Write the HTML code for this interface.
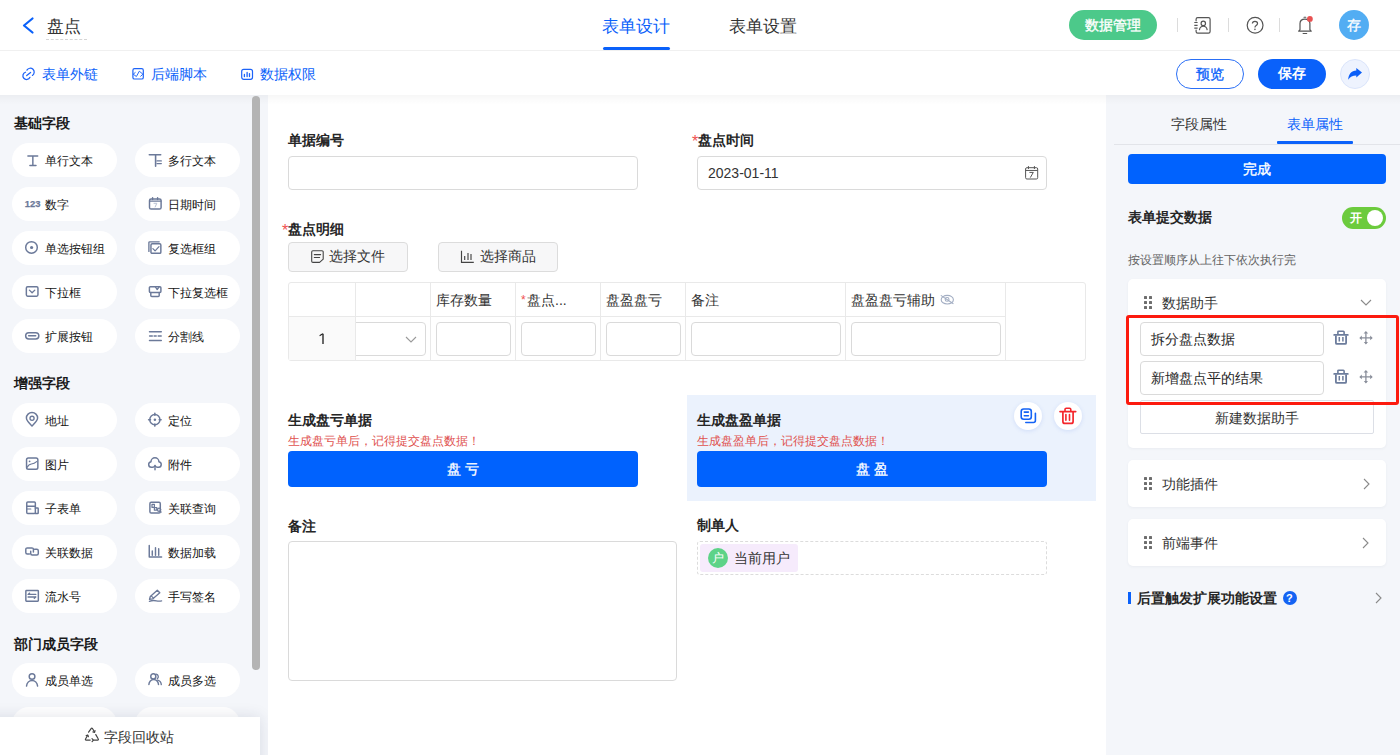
<!DOCTYPE html>
<html><head><meta charset="utf-8">
<style>
*{box-sizing:border-box;margin:0;padding:0}
html,body{width:1400px;height:755px;overflow:hidden;background:#fff}
body{font-family:"Liberation Sans",sans-serif;color:#333;position:relative}
.a{position:absolute}
.t{position:absolute;line-height:20px;white-space:nowrap}
svg{position:absolute;overflow:visible}
/* header */
#hdr{left:0;top:0;width:1400px;height:51px;background:#fff;border-bottom:1px solid #f0f0f0}
#tb{left:0;top:51px;width:1400px;height:44px;background:#fff}
#lp{left:0;top:95px;width:268px;height:660px;background:#f4f6fa}
#cv{left:268px;top:95px;width:838px;height:660px;background:#fff}
#rp{left:1106px;top:95px;width:294px;height:660px;background:#f4f6fa}
#shadow{left:0;top:95px;width:1400px;height:10px;background:linear-gradient(rgba(0,0,0,0.035),rgba(0,0,0,0.012) 60%,rgba(0,0,0,0))}
.blue{color:#0a61fa}
.pill{position:absolute;width:105px;height:34px;border-radius:17px;background:#fff}
.pill .t{left:33px;top:8px;font-size:12px;color:#141414}
.pill svg{left:15px;top:11px}
.sec{position:absolute;left:14px;font-size:14px;font-weight:bold;color:#1a1a1a;line-height:20px}
</style></head><body>
<div id="hdr" class="a"></div>
<div id="tb" class="a"></div>
<div id="lp" class="a"></div>
<div id="cv" class="a"></div>
<div id="rp" class="a"></div>
<div id="shadow" class="a"></div>
<!-- LEFT PANEL -->
<div class="sec" style="top:113px">基础字段</div>
<div class="pill" style="left:12px;top:143px"><svg width="14" height="14" style="left:13px;top:10px"><path d="M2.9 3.1H12.7M7.85 3.1V12.6M4.9 12.6H11" fill="none" stroke="#6b7999" stroke-width="1.46" stroke-linecap="round" stroke-linejoin="round" /></svg><div class="t">单行文本</div></div>
<div class="pill" style="left:135px;top:143px"><svg width="14" height="14" style="left:13px;top:10px"><path d="M1.3 1.8H12.7M7.6 1.8V13.3" fill="none" stroke="#6b7999" stroke-width="1.57" stroke-linecap="round" stroke-linejoin="round" /><path d="M9 7.9H13.3M9 10.6H13.3" fill="none" stroke="#6b7999" stroke-width="1.34" stroke-linecap="round" stroke-linejoin="round" /></svg><div class="t">多行文本</div></div>
<div class="pill" style="left:12px;top:187px"><svg width="14" height="14" style="left:13px;top:10px"><text x="-0.3" y="9.8" font-family="Liberation Sans" font-weight="bold" font-size="9.4" stroke="#6b7999" stroke-width="0.25" fill="#6b7999">123</text></svg><div class="t">数字</div></div>
<div class="pill" style="left:135px;top:187px"><svg width="14" height="14" style="left:13px;top:10px"><rect x="1.5" y="1.9" width="11.6" height="10.2" rx="1.6" fill="none" stroke="#6b7999" stroke-width="1.46"/><path d="M1.8 4.2H12.8" fill="none" stroke="#6b7999" stroke-width="1.34" stroke-linecap="round" stroke-linejoin="round" /><path d="M4.6 0.8V2.6M9.6 0.8V2.6" fill="none" stroke="#6b7999" stroke-width="1.46" stroke-linecap="round" stroke-linejoin="round" /><path d="M5.6 6.3H8.8L7 10.3" fill="none" stroke="#b9c2d4" stroke-width="1"/></svg><div class="t">日期时间</div></div>
<div class="pill" style="left:12px;top:231px"><svg width="14" height="14" style="left:13px;top:10px"><circle cx="6.5" cy="6.45" r="5.8" fill="none" stroke="#6b7999" stroke-width="1.46"/><circle cx="6.6" cy="6.5" r="1.6" fill="#6b7999"/></svg><div class="t">单选按钮组</div></div>
<div class="pill" style="left:135px;top:231px"><svg width="14" height="14" style="left:13px;top:10px"><path d="M0.9 10.4V1.6a0.8 0.8 0 0 1 0.8-0.8H11.2" fill="none" stroke="#6b7999" stroke-width="1.34" stroke-linecap="round" stroke-linejoin="round" /><rect x="2.95" y="2.75" width="9.9" height="9.6" rx="1.2" fill="none" stroke="#6b7999" stroke-width="1.46"/><path d="M4.9 7.6L7.1 9.9L11 5.6" fill="none" stroke="#6b7999" stroke-width="1.23" stroke-linecap="round" stroke-linejoin="round" /></svg><div class="t">复选框组</div></div>
<div class="pill" style="left:12px;top:275px"><svg width="14" height="14" style="left:13px;top:10px"><rect x="1.35" y="1.75" width="11.6" height="9.4" rx="1.3" fill="none" stroke="#6b7999" stroke-width="1.46"/><path d="M4.4 5.1L7.1 7.8L9.8 5.1" fill="none" stroke="#6b7999" stroke-width="1.34" stroke-linecap="round" stroke-linejoin="round" /></svg><div class="t">下拉框</div></div>
<div class="pill" style="left:135px;top:275px"><svg width="14" height="14" style="left:13px;top:10px"><path d="M2.6 7.4H11.9a1 1 0 0 0 1-1V2.8a1 1 0 0 0-1-1H2.4a1 1 0 0 0-1 1V6.4a1 1 0 0 0 1 1z" fill="none" stroke="#6b7999" stroke-width="1.46" stroke-linecap="round" stroke-linejoin="round" /><path d="M2.8 7.5V10.6a1 1 0 0 0 1 1H10.2a1 1 0 0 0 1-1V7.5" fill="none" stroke="#6b7999" stroke-width="1.46" stroke-linecap="round" stroke-linejoin="round" /><path d="M7.5 2.2L9.2 4.6L11 2.2" fill="none" stroke="#6b7999" stroke-width="1.23" stroke-linecap="round" stroke-linejoin="round" /></svg><div class="t">下拉复选框</div></div>
<div class="pill" style="left:12px;top:319px"><svg width="14" height="14" style="left:13px;top:10px"><rect x="0.65" y="3.65" width="13.2" height="6.3" rx="3.15" fill="none" stroke="#6b7999" stroke-width="1.46"/><path d="M3.6 6.7H10.7" fill="none" stroke="#6b7999" stroke-width="1.46" stroke-linecap="round" stroke-linejoin="round" /></svg><div class="t">扩展按钮</div></div>
<div class="pill" style="left:135px;top:319px"><svg width="14" height="14" style="left:13px;top:10px"><path d="M1.5 2.7H13.3M1.5 11.4H13.3" fill="none" stroke="#6b7999" stroke-width="1.46" stroke-linecap="round" stroke-linejoin="round" /><path d="M1.6 7.1H4.3M6.1 7.1H8.2M10.2 7.1H13.2" fill="none" stroke="#6b7999" stroke-width="1.46" stroke-linecap="round" stroke-linejoin="round" /></svg><div class="t">分割线</div></div>
<div class="sec" style="top:373px">增强字段</div>
<div class="pill" style="left:12px;top:403px"><svg width="14" height="14" style="left:13px;top:10px"><path d="M7 13.1C4.2 10.3 1.4 7.8 1.4 5.1A5.6 5.6 0 0 1 12.6 5.1C12.6 7.8 9.8 10.3 7 13.1Z" fill="none" stroke="#6b7999" stroke-width="1.46" stroke-linecap="round" stroke-linejoin="round" /><circle cx="7.05" cy="5.3" r="2.05" fill="none" stroke="#6b7999" stroke-width="1.34"/></svg><div class="t">地址</div></div>
<div class="pill" style="left:135px;top:403px"><svg width="14" height="14" style="left:13px;top:10px"><circle cx="6.85" cy="6.7" r="5.1" fill="none" stroke="#6b7999" stroke-width="1.46"/><circle cx="6.9" cy="6.75" r="1.25" fill="#6b7999"/><path d="M6.85 0.4V2.3M6.85 11.1V13.1M0.6 6.7H2.5M11.2 6.7H13.1" fill="none" stroke="#6b7999" stroke-width="1.57" stroke-linecap="round" stroke-linejoin="round" /></svg><div class="t">定位</div></div>
<div class="pill" style="left:12px;top:447px"><svg width="14" height="14" style="left:13px;top:10px"><rect x="1.55" y="0.95" width="11.3" height="11.3" rx="1.8" fill="none" stroke="#6b7999" stroke-width="1.46"/><path d="M2.4 10.2C3 8 4.4 7.3 6.4 7C8.6 6.7 10 6 11.6 4.6" fill="none" stroke="#6b7999" stroke-width="1.23" stroke-linecap="round" stroke-linejoin="round" /><circle cx="4.6" cy="4.3" r="0.9" fill="#6b7999"/></svg><div class="t">图片</div></div>
<div class="pill" style="left:135px;top:447px"><svg width="14" height="14" style="left:13px;top:10px"><path d="M5.2 10.3H3.3A2.8 2.8 0 0 1 3 4.75A3.8 3.8 0 0 1 10.9 4.75A2.8 2.8 0 0 1 10.7 10.3H8.8" fill="none" stroke="#6b7999" stroke-width="1.46" stroke-linecap="round" stroke-linejoin="round" /><path d="M7 12.8V9" fill="none" stroke="#6b7999" stroke-width="1.46" stroke-linecap="round" stroke-linejoin="round" /><path d="M4.9 9.9L7 7.4L9.1 9.9Z" fill="#6b7999"/></svg><div class="t">附件</div></div>
<div class="pill" style="left:12px;top:491px"><svg width="14" height="14" style="left:13px;top:10px"><rect x="1.75" y="1" width="8.6" height="11.5" rx="1" fill="none" stroke="#6b7999" stroke-width="1.46"/><path d="M1.8 5.2H10.3" fill="none" stroke="#6b7999" stroke-width="1.46" stroke-linecap="round" stroke-linejoin="round" /><path d="M1.8 8H5.8" fill="none" stroke="#6b7999" stroke-width="1.23" stroke-linecap="round" stroke-linejoin="round" /><path d="M10.3 6.9H12.6a0.6 0.6 0 0 1 0.6 0.6V12a0.6 0.6 0 0 1-0.6 0.6H10.3" fill="none" stroke="#6b7999" stroke-width="1.46" stroke-linecap="round" stroke-linejoin="round" /></svg><div class="t">子表单</div></div>
<div class="pill" style="left:135px;top:491px"><svg width="14" height="14" style="left:13px;top:10px"><rect x="1.9" y="1.35" width="10.4" height="10.6" rx="1.3" fill="none" stroke="#6b7999" stroke-width="1.46"/><path d="M4 3.4H6.4V6.4H4Z" fill="none" stroke="#6b7999" stroke-width="1.23" stroke-linecap="round" stroke-linejoin="round" /><path d="M6.4 6.6H8.8V9.2H6.4Z" fill="none" stroke="#6b7999" stroke-width="1.23" stroke-linecap="round" stroke-linejoin="round" /><circle cx="11.1" cy="8.7" r="1.6" fill="none" stroke="#6b7999" stroke-width="1.34"/><path d="M12.2 9.9L13 11.2" fill="none" stroke="#6b7999" stroke-width="1.34" stroke-linecap="round" stroke-linejoin="round" /></svg><div class="t">关联查询</div></div>
<div class="pill" style="left:12px;top:535px"><svg width="14" height="14" style="left:13px;top:10px"><path d="M4.4 9H2.3A1.5 1.5 0 0 1 0.8 7.5V4.4A1.5 1.5 0 0 1 2.3 2.9H6.9A1.5 1.5 0 0 1 8.4 4.4V7" fill="none" stroke="#6b7999" stroke-width="1.46" stroke-linecap="round" stroke-linejoin="round" /><path d="M9.5 4.3H11.8A1.5 1.5 0 0 1 13.3 5.8V8.6A1.5 1.5 0 0 1 11.8 10.1H7.2A1.5 1.5 0 0 1 5.7 8.6V6.2" fill="none" stroke="#6b7999" stroke-width="1.46" stroke-linecap="round" stroke-linejoin="round" /></svg><div class="t">关联数据</div></div>
<div class="pill" style="left:135px;top:535px"><svg width="14" height="14" style="left:13px;top:10px"><path d="M1.25 0.6V12.1H13.6" fill="none" stroke="#6b7999" stroke-width="1.46" stroke-linecap="round" stroke-linejoin="round" /><path d="M4.3 5.9V10.3M7.5 2.7V10.3M10.7 3.8V10.3" fill="none" stroke="#6b7999" stroke-width="1.46" stroke-linecap="round" stroke-linejoin="round" /></svg><div class="t">数据加载</div></div>
<div class="pill" style="left:12px;top:579px"><svg width="14" height="14" style="left:13px;top:10px"><rect x="0.85" y="1.55" width="12.5" height="10.6" rx="0.6" fill="none" stroke="#6b7999" stroke-width="1.46"/><path d="M3.1 5.4H10.8M3.2 5.4L4.6 4.1M3.1 8H10.8M10.8 8L9.3 9.3" fill="none" stroke="#6b7999" stroke-width="1.34" stroke-linecap="round" stroke-linejoin="round" /></svg><div class="t">流水号</div></div>
<div class="pill" style="left:135px;top:579px"><svg width="14" height="14" style="left:13px;top:10px"><path d="M1.5 10.4L2.3 7.5L9.3 1.2L11.8 3.7L4.6 9.9Z" fill="none" stroke="#6b7999" stroke-width="1.34" stroke-linecap="round" stroke-linejoin="round" /><path d="M3.4 7.2L5.4 9" fill="none" stroke="#6b7999" stroke-width="1.12" stroke-linecap="round" stroke-linejoin="round" /><path d="M1.4 12.3C4 11.3 6.5 11.4 8.3 11.8C10 12.2 11.8 12.3 13.6 11.9" fill="none" stroke="#6b7999" stroke-width="1.34" stroke-linecap="round" stroke-linejoin="round" /></svg><div class="t">手写签名</div></div>
<div class="sec" style="top:634px">部门成员字段</div>
<div class="pill" style="left:12px;top:663px"><svg width="14" height="14" style="left:13px;top:10px"><circle cx="7.05" cy="3.5" r="2.85" fill="none" stroke="#6b7999" stroke-width="1.46"/><path d="M1.5 13.1A5.6 6.4 0 0 1 12.6 13.1" fill="none" stroke="#6b7999" stroke-width="1.46" stroke-linecap="round" stroke-linejoin="round" /></svg><div class="t">成员单选</div></div>
<div class="pill" style="left:135px;top:663px"><svg width="14" height="14" style="left:13px;top:10px"><circle cx="5.3" cy="3.4" r="2.55" fill="none" stroke="#6b7999" stroke-width="1.46"/><path d="M8.2 1.1A2.6 2.6 0 0 1 9.3 5.7" fill="none" stroke="#6b7999" stroke-width="1.34" stroke-linecap="round" stroke-linejoin="round" /><path d="M0.9 11.6A4.8 5.2 0 0 1 10.5 11.6" fill="none" stroke="#6b7999" stroke-width="1.46" stroke-linecap="round" stroke-linejoin="round" /><path d="M9.6 7.1A4.7 5 0 0 1 13.3 11.6" fill="none" stroke="#6b7999" stroke-width="1.34" stroke-linecap="round" stroke-linejoin="round" /></svg><div class="t">成员多选</div></div>
<div class="pill" style="left:12px;top:707px"></div><div class="pill" style="left:135px;top:707px"></div>
<div class="a" style="left:252px;top:96px;width:8px;height:574px;border-radius:4px;background:#b4b4b4"></div>
<div class="a" style="left:0;top:600px;width:268px;height:155px;overflow:hidden"><div class="a" style="left:-20px;top:117px;width:280px;height:60px;background:#fff;box-shadow:0 0 14px rgba(30,40,80,0.13)"></div></div>
<svg width="18" height="18" style="left:83px;top:726px"><g fill="none" stroke="#444" stroke-width="1.2" stroke-linejoin="round" stroke-linecap="round"><path d="M5.6 6.2L8.3 2.3a0.6 0.6 0 0 1 1 0L11.4 5.8"/><path d="M12.8 8.6L15.3 13a0.7 0.7 0 0 1-0.6 1.1H10.6"/><path d="M7.2 14.1H3.1a0.7 0.7 0 0 1-0.6-1.1L4.7 9.3"/><path d="M9.9 5.9L11.6 6.3L12 4.6"/><path d="M3.2 9.6L4.8 9.1L5.4 10.7"/><path d="M9.1 15.6L10.4 14.1L9 12.7"/></g></svg>
<div class="t" style="left:104px;top:727px;font-size:14px;color:#333">字段回收站</div>
<!-- CANVAS -->
<style>
.lbl{position:absolute;font-size:14px;font-weight:bold;color:#262626;line-height:20px;white-space:nowrap}
.req{color:#f0504f;font-weight:normal;font-size:16px;position:absolute;left:-6px;top:2px}
.inp{position:absolute;border:1px solid #dadada;border-radius:4px;background:#fff}
.th{position:absolute;font-size:14px;color:#333;line-height:20px;white-space:nowrap;top:290px}
.vl{position:absolute;width:1px;background:#e9e9e9}
.btn2{position:absolute;height:30px;width:120px;border:1px solid #dcdcdc;border-radius:4px;background:#f7f7f8}
</style>
<div class="lbl" style="left:288px;top:130px">单据编号</div>
<div class="inp" style="left:288px;top:156px;width:350px;height:34px"></div>
<div class="lbl" style="left:698px;top:130px"><span class="req">*</span>盘点时间</div>
<div class="inp" style="left:697px;top:156px;width:350px;height:34px"></div>
<div class="t" style="left:708px;top:163px;font-size:14px;color:#333">2023-01-11</div>
<svg width="24" height="22" style="left:1020px;top:162px"><rect x="5.6" y="5.7" width="12.1" height="11.3" rx="1.3" fill="none" stroke="#555" stroke-width="1"/><path d="M5.6 8.45H17.7M8.45 4.1V7M14.4 4.1V7" stroke="#555" stroke-width="1" fill="none"/><path d="M9.4 10.4H13.3L10.3 15.6" fill="none" stroke="#555" stroke-width="1"/></svg>
<div class="lbl" style="left:288px;top:219px"><span class="req">*</span>盘点明细</div>
<div class="btn2" style="left:288px;top:242px"></div>
<svg width="24" height="22" style="left:306px;top:246px"><path d="M5.7 6a1.2 1.2 0 0 1 1.2-1.2H16a1.2 1.2 0 0 1 1.2 1.2V13.2L13.6 16.4H6.9a1.2 1.2 0 0 1-1.2-1.2Z" fill="none" stroke="#444" stroke-width="1.1" stroke-linejoin="round"/><path d="M8.3 8.6H14.6M8.3 11.5H13.6" stroke="#444" stroke-width="1.1" stroke-linecap="round"/></svg>
<div class="t" style="left:329px;top:246px;font-size:14px;color:#333">选择文件</div>
<div class="btn2" style="left:438px;top:242px"></div>
<svg width="24" height="22" style="left:456px;top:246px"><path d="M5.5 4.7V16.4H17.8" fill="none" stroke="#444" stroke-width="1.15"/><path d="M8.7 10V14M12 7V14M15 8V14" stroke="#444" stroke-width="1.15"/></svg>
<div class="t" style="left:480px;top:246px;font-size:14px;color:#333">选择商品</div>
<!-- table -->
<div class="a" style="left:288px;top:282px;width:798px;height:79px;border:1px solid #e9e9e9;border-radius:3px"></div>
<div class="a" style="left:289px;top:317px;width:66px;height:43px;background:#fafafa"></div>
<div class="a" style="left:289px;top:316px;width:717px;height:1px;background:#e9e9e9"></div>
<div class="vl" style="left:355px;top:283px;height:77px"></div>
<div class="vl" style="left:430px;top:283px;height:77px"></div>
<div class="vl" style="left:515px;top:283px;height:77px"></div>
<div class="vl" style="left:600px;top:283px;height:77px"></div>
<div class="vl" style="left:685px;top:283px;height:77px"></div>
<div class="vl" style="left:845px;top:283px;height:77px"></div>
<div class="vl" style="left:1005px;top:283px;height:77px"></div>
<div class="th" style="left:436px">库存数量</div>
<div class="th" style="left:527px"><span style="color:#f0504f;font-size:12px;position:absolute;left:-6px;top:0">*</span>盘点...</div>
<div class="th" style="left:606px">盘盈盘亏</div>
<div class="th" style="left:691px">备注</div>
<div class="th" style="left:851px">盘盈盘亏辅助</div>
<svg width="24" height="20" style="left:936px;top:290px"><ellipse cx="11.3" cy="9.7" rx="6.1" ry="4.3" fill="none" stroke="#a3aec3" stroke-width="1.1"/><circle cx="11.1" cy="9.4" r="1.9" fill="none" stroke="#a3aec3" stroke-width="1.1"/><path d="M4.8 5.4L17.4 13.8" stroke="#a3aec3" stroke-width="1.1"/></svg>
<svg width="10" height="14" style="left:317px;top:332px"><path d="M2.6 3.7C3.9 3.1 5 2.4 5.9 1.8" fill="none" stroke="#222" stroke-width="1.2"/><path d="M6 1.8V12" stroke="#222" stroke-width="1.35"/></svg>
<div class="a" style="left:356px;top:322px;width:70px;height:34px;overflow:hidden"><div class="inp" style="left:-10px;top:0;width:80px;height:34px"></div></div>
<svg width="14" height="10" style="left:404px;top:334px"><path d="M2 3l5 5 5-5" fill="none" stroke="#9a9a9a" stroke-width="1.1"/></svg>
<div class="inp" style="left:436px;top:322px;width:75px;height:34px"></div>
<div class="inp" style="left:521px;top:322px;width:75px;height:34px"></div>
<div class="inp" style="left:606px;top:322px;width:75px;height:34px"></div>
<div class="inp" style="left:691px;top:322px;width:150px;height:34px"></div>
<div class="inp" style="left:851px;top:322px;width:150px;height:34px"></div>
<!-- generate sections -->
<div class="lbl" style="left:288px;top:410px">生成盘亏单据</div>
<div class="t" style="left:288px;top:431px;font-size:12px;color:#e0524f">生成盘亏单后，记得提交盘点数据！</div>
<div class="a" style="left:288px;top:451px;width:350px;height:36px;border-radius:4px;background:#0062fe"></div>
<div class="t" style="left:288px;top:459px;width:350px;text-align:center;font-size:14px;color:#fff;letter-spacing:4px;text-indent:4px;-webkit-text-stroke:0.3px #fff">盘亏</div>
<div class="a" style="left:687px;top:395px;width:409px;height:106px;background:#ebf2fd"></div>
<div class="lbl" style="left:697px;top:410px">生成盘盈单据</div>
<div class="t" style="left:697px;top:431px;font-size:12px;color:#e0524f">生成盘盈单后，记得提交盘点数据！</div>
<div class="a" style="left:697px;top:451px;width:350px;height:36px;border-radius:4px;background:#0062fe"></div>
<div class="t" style="left:697px;top:459px;width:350px;text-align:center;font-size:14px;color:#fff;letter-spacing:4px;text-indent:4px;-webkit-text-stroke:0.3px #fff">盘盈</div>
<div class="a" style="left:1014px;top:402px;width:28px;height:28px;border-radius:50%;background:#fff;box-shadow:0 1px 4px rgba(60,110,220,0.15)"></div>
<svg width="28" height="28" style="left:1014px;top:402px"><rect x="7.2" y="7" width="10.1" height="10.2" rx="2.5" fill="none" stroke="#1463f5" stroke-width="1.6"/><path d="M10.3 10.1H14.4M10.3 13.7H14.4" stroke="#1463f5" stroke-width="1.6" stroke-linecap="round"/><path d="M21.4 11.2V18.5a2 2 0 0 1-2 2H11.8" fill="none" stroke="#1463f5" stroke-width="1.6" stroke-linecap="round"/></svg>
<div class="a" style="left:1054px;top:402px;width:28px;height:28px;border-radius:50%;background:#fff;box-shadow:0 1px 4px rgba(60,110,220,0.15)"></div>
<svg width="28" height="28" style="left:1054px;top:402px"><path d="M6 9.6H21.7" stroke="#f4262c" stroke-width="1.7" stroke-linecap="round"/><path d="M11 9.3V7.6a1.3 1.3 0 0 1 1.3-1.3h3.2a1.3 1.3 0 0 1 1.3 1.3V9.3" fill="none" stroke="#f4262c" stroke-width="1.6"/><path d="M8.9 10V19.4a2 2 0 0 0 2 2H17.1a2 2 0 0 0 2-2V10" fill="none" stroke="#f4262c" stroke-width="1.7"/><path d="M11.9 12.6V18.2M15.5 12.6V18.2" stroke="#f4262c" stroke-width="1.6" stroke-linecap="round"/></svg>
<div class="lbl" style="left:288px;top:516px">备注</div>
<div class="inp" style="left:288px;top:541px;width:389px;height:140px"></div>
<div class="lbl" style="left:697px;top:515px">制单人</div>
<div class="a" style="left:697px;top:541px;width:350px;height:34px;border:1px dashed #dcdcdc;border-radius:3px"></div>
<div class="a" style="left:700px;top:544px;width:98px;height:28px;border-radius:3px;background:#f6ebfc"></div>
<div class="a" style="left:708px;top:548px;width:20px;height:20px;border-radius:50%;background:#5dd388"></div>
<div class="t" style="left:712px;top:548px;font-size:12px;color:#fff">户</div>
<div class="t" style="left:734px;top:548px;font-size:14px;color:#333">当前用户</div>
<!-- RIGHT PANEL -->
<div class="t" style="left:1171px;top:114px;font-size:14px;color:#333">字段属性</div>
<div class="t" style="left:1287px;top:114px;font-size:14px;color:#0a61fa">表单属性</div>
<div class="a" style="left:1114px;top:144px;width:286px;height:1px;background:#e2e4e9"></div>
<div class="a" style="left:1277px;top:141px;width:76px;height:3px;border-radius:1px;background:#0a61fa"></div>
<div class="a" style="left:1128px;top:154px;width:258px;height:30px;border-radius:4px;background:#0062fe"></div>
<div class="t" style="left:1128px;top:159px;width:258px;text-align:center;font-size:14px;color:#fff;-webkit-text-stroke:0.35px #fff">完成</div>
<div class="t" style="left:1128px;top:207px;font-size:14px;color:#262626;font-weight:bold">表单提交数据</div>
<div class="a" style="left:1342px;top:207px;width:44px;height:22px;border-radius:11px;background:#6ccb3d"></div>
<div class="a" style="left:1367px;top:210px;width:16px;height:16px;border-radius:50%;background:#fff"></div>
<div class="t" style="left:1350px;top:208px;font-size:12px;color:#fff;font-weight:bold">开</div>
<div class="t" style="left:1128px;top:250px;font-size:12px;color:#626262">按设置顺序从上往下依次执行完</div>
<div class="a" style="left:1128px;top:279px;width:258px;height:169px;border-radius:5px;background:#fff;box-shadow:0 1px 3px rgba(40,50,80,0.05)"></div>

<div class="a" style="left:1144px;top:296px;width:3px;height:3px;background:#6e6e6e;border-radius:0.5px"></div><div class="a" style="left:1144px;top:301px;width:3px;height:3px;background:#6e6e6e;border-radius:0.5px"></div><div class="a" style="left:1144px;top:306px;width:3px;height:3px;background:#6e6e6e;border-radius:0.5px"></div><div class="a" style="left:1149px;top:296px;width:3px;height:3px;background:#6e6e6e;border-radius:0.5px"></div><div class="a" style="left:1149px;top:301px;width:3px;height:3px;background:#6e6e6e;border-radius:0.5px"></div><div class="a" style="left:1149px;top:306px;width:3px;height:3px;background:#6e6e6e;border-radius:0.5px"></div>
<div class="t" style="left:1162px;top:293px;font-size:14px;color:#333">数据助手</div>
<svg width="14" height="10" style="left:1359px;top:298px"><path d="M2 2l5 5 5-5" fill="none" stroke="#8a8a8a" stroke-width="1.1"/></svg>
<div class="inp" style="left:1140px;top:322px;width:184px;height:34px"></div>
<div class="t" style="left:1151px;top:329px;font-size:14px;color:#262626">拆分盘点数据</div>
<div class="inp" style="left:1140px;top:361px;width:184px;height:34px"></div>
<div class="t" style="left:1151px;top:368px;font-size:14px;color:#262626">新增盘点平的结果</div>
<svg width="16" height="16" style="left:1333px;top:330px"><path d="M1.2 4.9H14.8" stroke="#6c7c9c" stroke-width="1.8" stroke-linecap="round"/><path d="M4.9 4.6V2a0.8 0.8 0 0 1 0.8-0.8H10.3a0.8 0.8 0 0 1 0.8 0.8V4.6" fill="none" stroke="#6c7c9c" stroke-width="1.6"/><path d="M2.9 5.5V12.9a1 1 0 0 0 1 1H12.1a1 1 0 0 0 1-1V5.5" fill="none" stroke="#6c7c9c" stroke-width="1.8"/><path d="M6.3 6.9V11.5M9.9 6.9V11.5" stroke="#6c7c9c" stroke-width="1.5"/></svg>
<svg width="16" height="16" style="left:1358px;top:330px"><path d="M2.5 7.9H13.5M7.9 2.2V13.4" stroke="#8a8f9b" stroke-width="1.3"/><path d="M7.9 0.9L5.6 3.4H10.2ZM7.9 14.5L5.8 12.1H10ZM1.3 7.9L3.8 5.6V10.2ZM14.7 7.9L12.2 5.6V10.2Z" fill="#8a8f9b"/></svg>
<svg width="16" height="16" style="left:1333px;top:369px"><path d="M1.2 4.9H14.8" stroke="#6c7c9c" stroke-width="1.8" stroke-linecap="round"/><path d="M4.9 4.6V2a0.8 0.8 0 0 1 0.8-0.8H10.3a0.8 0.8 0 0 1 0.8 0.8V4.6" fill="none" stroke="#6c7c9c" stroke-width="1.6"/><path d="M2.9 5.5V12.9a1 1 0 0 0 1 1H12.1a1 1 0 0 0 1-1V5.5" fill="none" stroke="#6c7c9c" stroke-width="1.8"/><path d="M6.3 6.9V11.5M9.9 6.9V11.5" stroke="#6c7c9c" stroke-width="1.5"/></svg>
<svg width="16" height="16" style="left:1358px;top:369px"><path d="M2.5 7.9H13.5M7.9 2.2V13.4" stroke="#8a8f9b" stroke-width="1.3"/><path d="M7.9 0.9L5.6 3.4H10.2ZM7.9 14.5L5.8 12.1H10ZM1.3 7.9L3.8 5.6V10.2ZM14.7 7.9L12.2 5.6V10.2Z" fill="#8a8f9b"/></svg>
<div class="a" style="left:1140px;top:400px;width:234px;height:34px;border:1px solid #dcdfe6;border-radius:2px;background:#fff"></div>
<div class="t" style="left:1140px;top:408px;width:234px;text-align:center;font-size:14px;color:#333">新建数据助手</div>
<div class="a" style="left:1126px;top:315px;width:273px;height:90px;border:3px solid #fc1a0e;border-radius:3px"></div>
<div class="a" style="left:1128px;top:460px;width:258px;height:47px;border-radius:5px;background:#fff;box-shadow:0 1px 3px rgba(40,50,80,0.05)"></div>

<div class="a" style="left:1144px;top:477px;width:3px;height:3px;background:#6e6e6e;border-radius:0.5px"></div><div class="a" style="left:1144px;top:482px;width:3px;height:3px;background:#6e6e6e;border-radius:0.5px"></div><div class="a" style="left:1144px;top:487px;width:3px;height:3px;background:#6e6e6e;border-radius:0.5px"></div><div class="a" style="left:1149px;top:477px;width:3px;height:3px;background:#6e6e6e;border-radius:0.5px"></div><div class="a" style="left:1149px;top:482px;width:3px;height:3px;background:#6e6e6e;border-radius:0.5px"></div><div class="a" style="left:1149px;top:487px;width:3px;height:3px;background:#6e6e6e;border-radius:0.5px"></div>
<div class="t" style="left:1162px;top:474px;font-size:14px;color:#333">功能插件</div>
<svg width="10" height="14" style="left:1361px;top:477px"><path d="M3 2l5 5-5 5" fill="none" stroke="#8a8a8a" stroke-width="1.1"/></svg>
<div class="a" style="left:1128px;top:519px;width:258px;height:47px;border-radius:5px;background:#fff;box-shadow:0 1px 3px rgba(40,50,80,0.05)"></div>

<div class="a" style="left:1144px;top:536px;width:3px;height:3px;background:#6e6e6e;border-radius:0.5px"></div><div class="a" style="left:1144px;top:541px;width:3px;height:3px;background:#6e6e6e;border-radius:0.5px"></div><div class="a" style="left:1144px;top:546px;width:3px;height:3px;background:#6e6e6e;border-radius:0.5px"></div><div class="a" style="left:1149px;top:536px;width:3px;height:3px;background:#6e6e6e;border-radius:0.5px"></div><div class="a" style="left:1149px;top:541px;width:3px;height:3px;background:#6e6e6e;border-radius:0.5px"></div><div class="a" style="left:1149px;top:546px;width:3px;height:3px;background:#6e6e6e;border-radius:0.5px"></div>
<div class="t" style="left:1162px;top:533px;font-size:14px;color:#333">前端事件</div>
<svg width="10" height="14" style="left:1360px;top:536px"><path d="M3 2l5 5-5 5" fill="none" stroke="#8a8a8a" stroke-width="1.1"/></svg>
<div class="a" style="left:1128px;top:592px;width:3px;height:12px;background:#0a61fa"></div>
<div class="t" style="left:1137px;top:588px;font-size:14px;color:#262626;font-weight:bold">后置触发扩展功能设置</div>
<div class="a" style="left:1283px;top:591px;width:14px;height:14px;border-radius:50%;background:#1463f3"></div>
<div class="t" style="left:1286px;top:588px;font-size:11px;color:#fff;font-weight:bold">?</div>
<svg width="10" height="14" style="left:1373px;top:591px"><path d="M3 2l5 5-5 5" fill="none" stroke="#8a8a8a" stroke-width="1.1"/></svg>
<!-- HEADER -->
<svg style="left:0;top:0" width="40" height="50"><path d="M32.5 18.5 L24 25.5 L32.5 32.5" fill="none" stroke="#0a61fa" stroke-width="2.2" stroke-linecap="round" stroke-linejoin="round"/></svg>
<div class="t" style="left:47px;top:17px;font-size:17px;color:#333">盘点</div>
<div class="a" style="left:46px;top:39px;width:41px;height:0;border-top:1px dashed #d5d5d5"></div>
<div class="t" style="left:602px;top:17px;font-size:17px;color:#0a61fa">表单设计</div>
<div class="a" style="left:603px;top:47px;width:67px;height:3px;border-radius:2px;background:#0a61fa"></div>
<div class="t" style="left:729px;top:17px;font-size:17px;color:#333">表单设置</div>
<div class="a" style="left:1069px;top:10px;width:88px;height:30px;border-radius:15px;background:#4cc98a"></div>
<div class="t" style="left:1085px;top:15px;font-size:14px;color:#fff;-webkit-text-stroke:0.35px #fff">数据管理</div>
<div class="a" style="left:1177px;top:18px;width:1px;height:14px;background:#dcdcdc"></div>
<div class="a" style="left:1228px;top:18px;width:1px;height:14px;background:#dcdcdc"></div>
<div class="a" style="left:1279px;top:18px;width:1px;height:14px;background:#dcdcdc"></div>
<svg style="left:1190px;top:12px" width="26" height="26"><g fill="none" stroke="#555" stroke-width="1.2" stroke-linecap="round"><path d="M6.1 8.8V7.2a1.6 1.6 0 0 1 1.6-1.6H18.5a1.6 1.6 0 0 1 1.6 1.6V19.5a1.6 1.6 0 0 1-1.6 1.6H7.7a1.6 1.6 0 0 1-1.6-1.6V18"/><path d="M4.3 10.5H7.6M4.3 13.4H7.6M4.3 16.2H7.6" stroke-linecap="butt"/><circle cx="13.3" cy="11.4" r="2.2"/><path d="M9.5 17.6A3.85 4 0 0 1 17.1 17.6"/></g></svg>
<svg style="left:1242px;top:12px" width="26" height="26"><circle cx="13.1" cy="13.25" r="7.9" fill="none" stroke="#555" stroke-width="1.2"/><path d="M10.4 11.6C10.4 10 11.5 9.3 12.95 9.3C14.5 9.3 15.55 10.2 15.55 11.5C15.55 12.6 14.8 13.1 13.9 13.7C13.2 14.2 12.95 14.6 12.95 15.6" fill="none" stroke="#555" stroke-width="1.2"/><circle cx="12.95" cy="17.35" r="0.8" fill="#555"/></svg>
<svg style="left:1292px;top:12px" width="26" height="26"><path d="M6.7 19.2L8 17.7V11.6C8 8.9 10 7.2 12.9 7.2C15.8 7.2 17.9 8.9 17.9 11.6V17.7L19.2 19.2Z" fill="none" stroke="#555" stroke-width="1.2" stroke-linejoin="round"/><path d="M11.1 21.5H14.7M12 5.3H13.8" stroke="#555" stroke-width="1.1" stroke-linecap="round"/><circle cx="17.9" cy="6.9" r="2.9" fill="#e85151"/></svg>
<div class="a" style="left:1339px;top:10px;width:30px;height:30px;border-radius:50%;background:#52adf3"></div>
<div class="t" style="left:1347px;top:15px;font-size:14px;color:#fff;-webkit-text-stroke:0.35px #fff">存</div>
<!-- TOOLBAR -->
<svg style="left:18px;top:62px" width="24" height="24"><g fill="none" stroke="#1d63f8" stroke-width="1.25" stroke-linecap="round"><path d="M8.92 8.15A3.9 3.9 0 1 1 14.37 13.41"/><path d="M7.52 10.26A3.7 3.7 0 1 0 11.97 15.33"/><path d="M8.7 13.6L12.6 10.4"/></g></svg>
<div class="t blue" style="left:42px;top:64px;font-size:14px">表单外链</div>
<svg style="left:128px;top:62px" width="24" height="24"><rect x="4.9" y="6.6" width="10.4" height="10.4" rx="1.6" fill="none" stroke="#1d63f8" stroke-width="1.2"/><path d="M7.5 10.3L5.2 12.2L8.4 14.5L11.3 9.2L14.9 12.2L12.4 14.5" fill="none" stroke="#1d63f8" stroke-width="0.95" stroke-linejoin="round"/></svg>
<div class="t blue" style="left:151px;top:64px;font-size:14px">后端脚本</div>
<svg style="left:236px;top:62px" width="24" height="24"><rect x="5.7" y="7.4" width="10.8" height="9.9" rx="2" fill="none" stroke="#1d63f8" stroke-width="1.2"/><path d="M8.4 12.4V14.6M11.1 10.4V14.6M13.5 11.6V14.6" stroke="#1d63f8" stroke-width="1.3" stroke-linecap="round"/></svg>
<div class="t blue" style="left:260px;top:64px;font-size:14px">数据权限</div>
<div class="a" style="left:1176px;top:59px;width:68px;height:30px;border-radius:15px;border:1px solid #2a6ff6;background:#fff"></div>
<div class="t" style="left:1196px;top:64px;font-size:14px;color:#0a61fa;-webkit-text-stroke:0.3px #0a61fa">预览</div>
<div class="a" style="left:1258px;top:59px;width:68px;height:30px;border-radius:15px;background:#0a61fa"></div>
<div class="t" style="left:1278px;top:63px;font-size:14px;color:#fff;font-weight:bold">保存</div>
<div class="a" style="left:1340px;top:59px;width:30px;height:30px;border-radius:50%;background:#eef3fe;border:1px solid #dbe5fb"></div>
<svg style="left:1340px;top:59px" width="30" height="30"><path d="M8.2 20.8C8.4 15 11.5 11.6 16.3 11.4V8.9L22 13.6L16.3 18.6V16.6C12.6 16.6 10.2 18 8.2 20.8Z" fill="#0b5ff8"/></svg>

</body></html>
